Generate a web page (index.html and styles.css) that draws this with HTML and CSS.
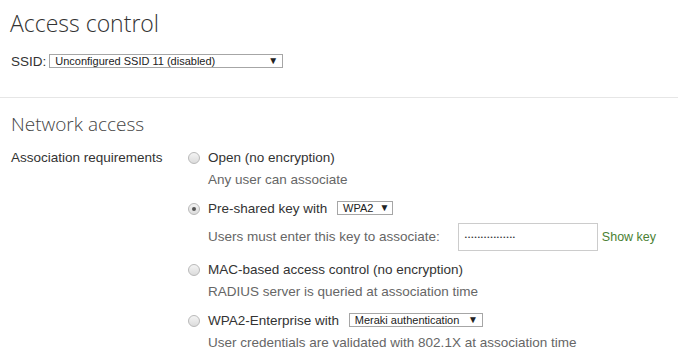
FILE: index.html
```html
<!DOCTYPE html>
<html lang="en">
<head>
    <meta charset="UTF-8">
    <title>Access control</title>
    <link rel="stylesheet" href="styles.css">
</head>
<body>
    <div class="page-head">
        <h1>Access control</h1>
        <div class="ssid-row">
            <span class="ssid-label">SSID:</span>
            <span class="dropdown dropdown-ssid">Unconfigured SSID 11 (disabled)<span class="caret">&#9660;</span></span>
        </div>
    </div>

    <div class="section">
        <h2>Network access</h2>
        <div class="field">
            <div class="field-label">Association requirements</div>
            <div class="options">

                <!-- open -->
                <div class="option">
                    <span class="radio"></span>
                    <div class="option-body">
                        <div class="option-title">Open (no encryption)</div>
                        <div class="option-note">Any user can associate</div>
                    </div>
                </div>

                <!-- psk -->
                <div class="option">
                    <span class="radio checked"></span>
                    <div class="option-body">
                        <div class="option-title">Pre-shared key with <span class="dropdown dropdown-wpa">WPA2<span class="caret">&#9660;</span></span></div>
                        <div class="option-note key-row">
                            <span class="key-text">Users must enter this key to associate:</span>
                            <span class="key-input"><span class="dots">••••••••••••••••</span></span>
                            <a class="show-key">Show key</a>
                        </div>
                    </div>
                </div>

                <!-- mac -->
                <div class="option">
                    <span class="radio"></span>
                    <div class="option-body">
                        <div class="option-title">MAC-based access control (no encryption)</div>
                        <div class="option-note">RADIUS server is queried at association time</div>
                    </div>
                </div>

                <!-- enterprise -->
                <div class="option">
                    <span class="radio"></span>
                    <div class="option-body">
                        <div class="option-title">WPA2-Enterprise with <span class="dropdown dropdown-auth">Meraki authentication<span class="caret">&#9660;</span></span></div>
                        <div class="option-note">User credentials are validated with 802.1X at association time</div>
                    </div>
                </div>

            </div>
        </div>
    </div>
</body>
</html>
```

FILE: styles.css
```css
body {
    margin: 0;
    background: #fff;
    color: #333;
    font-family: 'Liberation Sans', Arial, sans-serif;
    font-size: 13.5px;
}

/* 상단 제목 영역 */
.page-head {
    padding: 8px 10px 28px;
    border-bottom: 1px solid #e6e6e6;
}

h1 {
    margin: 0;
    font-family: 'Open Sans', sans-serif;
    font-weight: 300;
    font-size: 23px;
    line-height: 30px;
    color: #333;
}

.ssid-row {
    display: flex;
    align-items: center;
    margin-top: 15px;
    padding-left: 1px;
    height: 16px;
}

.ssid-label {
    margin-right: 3px;
}

/* 셀렉트 박스 */
.dropdown {
    display: inline-flex;
    align-items: center;
    justify-content: space-between;
    box-sizing: border-box;
    height: 14px;
    padding: 0 4px 0 5px;
    border: 1px solid #a6a6a6;
    background: #fff;
    font-size: 11px;
    line-height: 12px;
    color: #222;
    vertical-align: 1px;
}

.dropdown .caret {
    font-size: 10px;
    margin-left: 6px;
    color: #222;
}

.dropdown-ssid {
    width: 234px;
}

.dropdown-wpa {
    width: 56px;
    margin-left: 6px;
}

.dropdown-auth {
    width: 134px;
    margin-left: 6px;
}

/* 네트워크 접근 섹션 */
.section {
    padding: 15px 11px 0;
}

h2 {
    margin: 0;
    font-family: 'Open Sans', sans-serif;
    font-weight: 300;
    font-size: 19px;
    line-height: 22px;
    color: #444;
}

.field {
    display: flex;
    margin-top: 13px;
}

.field-label {
    width: 177px;
    line-height: 20px;
    color: #333;
}

.options {
    display: flex;
    flex-direction: column;
    gap: 9px;
}

.option {
    display: flex;
    align-items: flex-start;
}

.option-body {
    margin-left: 8px;
}

.option-title {
    line-height: 20px;
    color: #333;
}

.option-note {
    margin-top: 2px;
    line-height: 20px;
    color: #666;
}

/* 라디오 버튼 */
.radio {
    box-sizing: border-box;
    width: 12px;
    height: 12px;
    margin-top: 4px;
    border-radius: 50%;
    border: 1px solid #b9b9b9;
    background: linear-gradient(#f4f4f4, #dcdcdc);
    position: relative;
}

.radio.checked::after {
    content: '';
    position: absolute;
    left: 3px;
    top: 3px;
    width: 4px;
    height: 4px;
    border-radius: 50%;
    background: #555;
}

/* 키 입력 */
.key-row {
    display: flex;
    align-items: center;
    margin-top: 4px;
}

.key-input {
    box-sizing: border-box;
    width: 140px;
    height: 28px;
    margin-left: 18px;
    padding-left: 6px;
    border: 1px solid #ccc;
    display: flex;
    align-items: center;
}

.dots {
    font-size: 6px;
    letter-spacing: 1.1px;
    color: #333;
}

.show-key {
    margin-left: 4px;
    font-size: 12.5px;
    color: #4a7f33;
    cursor: pointer;
}
```
